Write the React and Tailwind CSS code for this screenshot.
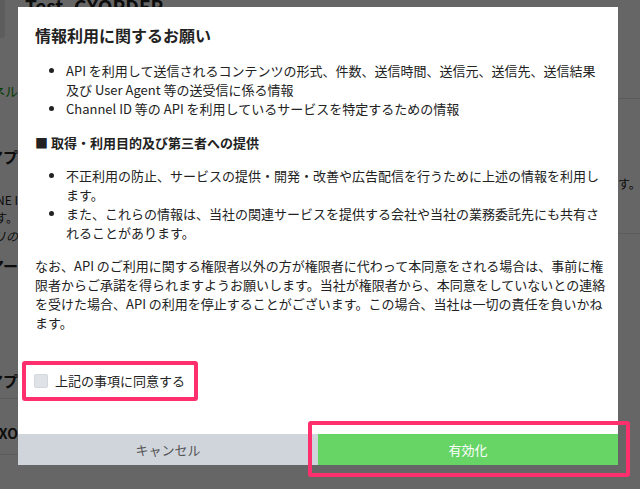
import React from "react";

const Fragment = ({ className, children }) => (
  <div className={`flex w-[18px] justify-end overflow-hidden whitespace-nowrap ${className}`}>
    <span>{children}</span>
  </div>
);

const ConsentModal = () => {
  return (
    <div className="absolute left-[18px] top-[7px] w-[600px] bg-white text-[#222]">
      <div className="whitespace-nowrap pt-[16px] pl-[17px] pr-[18px] text-[13px] leading-[19px]">
        {/* Title */}
        <h2 className="text-[16px] font-bold leading-[24px]">情報利用に関するお願い</h2>

        <ul className="mt-[14px] list-disc pl-[31px]">
          <li>
            API を利用して送信されるコンテンツの形式、件数、送信時間、送信元、送信先、送信結果
            <br />
            及び User Agent 等の送受信に係る情報
          </li>
          <li>Channel ID 等の API を利用しているサービスを特定するための情報</li>
        </ul>

        <h3 className="mt-[15px] font-bold">
          <span className="mr-[3px]">■</span>取得・利用目的及び第三者への提供
        </h3>

        <ul className="mt-[14px] list-disc pl-[31px]">
          <li>
            不正利用の防止、サービスの提供・開発・改善や広告配信を行うために上述の情報を利用し
            <br />
            ます。
          </li>
          <li>
            また、これらの情報は、当社の関連サービスを提供する会社や当社の業務委託先にも共有さ
            <br />
            れることがあります。
          </li>
        </ul>

        <p className="mt-[14px]">
          なお、API のご利用に関する権限者以外の方が権限者に代わって本同意をされる場合は、事前に権
          <br />
          限者からご承諾を得られますようお願いします。当社が権限者から、本同意をしていないとの連絡
          <br />
          を受けた場合、API の利用を停止することがございます。この場合、当社は一切の責任を負いかね
          <br />
          ます。
        </p>
      </div>

      {/* Agree checkbox */}
      <div className="pl-[4px] mt-[29px]">
        <label className="flex h-[40px] w-[176px] items-center gap-[7px] rounded-[3px] border-4 border-[#ff2f6e] pl-[8px] text-[13px]">
          <span className="h-[14px] w-[14px] rounded-[2px] border border-[#d3d8df] bg-[#dfe3e8]" />
          <span>上記の事項に同意する</span>
        </label>
      </div>

      {/* Footer buttons */}
      <div className="mt-[33px] flex h-[31px] text-[13px]">
        <button className="flex-1 bg-[#d0d5dc] text-[#555]">キャンセル</button>
        <button className="flex-1 bg-[#67d466] text-white">有効化</button>
      </div>
    </div>
  );
};

const App = () => {
  return (
    <div className="relative h-[489px] w-[640px] overflow-hidden bg-white font-['Noto_Sans_CJK_JP',sans-serif]">
      {/* Page behind the dialog */}
      <div className="flex h-full text-[#222]">
        <div className="flex w-[18px] flex-col">
          <div className="h-[38px] w-[5px] rounded-br-[4px] bg-[#e8e8e8]" />
          <Fragment className="mt-[43px] text-[13px] text-[#0a9a0a]">チャネル</Fragment>
          <Fragment className="mt-[45px] text-[15px] font-bold">アプ</Fragment>
          <Fragment className="mt-[23px] text-[12px] leading-[18px]">LINE I</Fragment>
          <Fragment className="text-[12px] leading-[18px]">ます。</Fragment>
          <Fragment className="text-[12px] leading-[18px] italic">アプリの</Fragment>
          <Fragment className="mt-[10px] text-[15px] font-bold">アー</Fragment>
          <Fragment className="mt-[92px] text-[15px] font-bold">アプ</Fragment>
          <div className="mt-[6px] h-px w-[18px] bg-[#e4e4e4]" />
          <Fragment className="mt-[24px] text-[14px] font-bold">CXO</Fragment>
          <div className="mt-[10px] h-px w-[18px] bg-[#e4e4e4]" />
        </div>
        <div className="flex-1 pl-[7px]">
          <div className="mt-[-8px] text-[19px] font-bold">Test_CXORDER</div>
        </div>
        <div className="flex w-[22px] flex-col">
          <div className="mt-[98px] h-px bg-[#e4e4e4]" />
          <div className="mt-[76px] whitespace-nowrap text-[12px]">す。L</div>
          <div className="mt-[40px] h-px bg-[#e4e4e4]" />
        </div>
      </div>

      {/* Overlay */}
      <div className="absolute inset-0 bg-black/60" />

      <ConsentModal />

      {/* Highlight around the enable button */}
      <div className="absolute left-[308px] top-[421px] h-[56px] w-[322px] rounded-[3px] border-4 border-[#ff2f6e]" />
    </div>
  );
};

export default App;
